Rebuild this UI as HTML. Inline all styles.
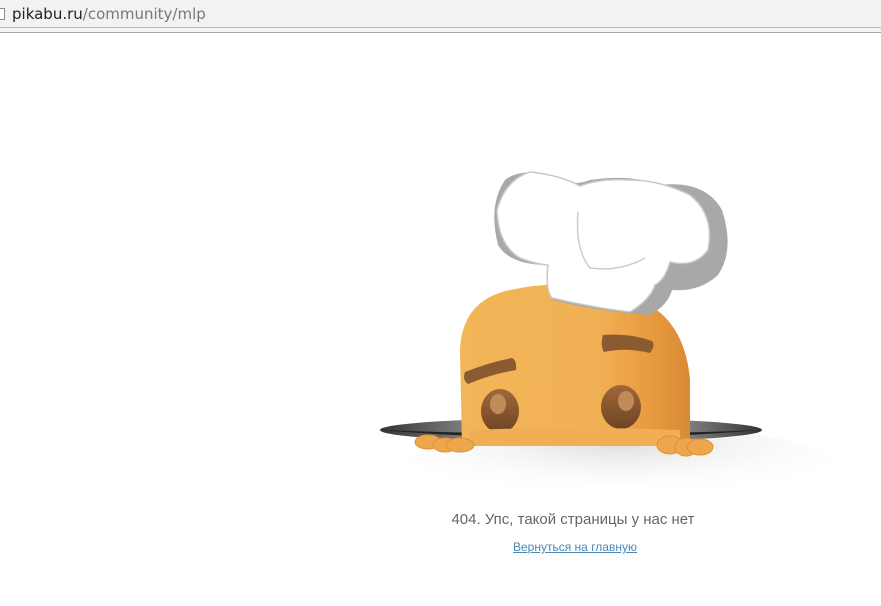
<!DOCTYPE html>
<html><head><meta charset="utf-8"><style>
html,body{margin:0;padding:0;width:881px;height:606px;overflow:hidden;background:#fff;font-family:"Liberation Sans","DejaVu Sans",sans-serif}
.bar{position:absolute;left:0;top:0;width:881px;height:27px;background:#f2f2f1;border-bottom:1px solid #b8b8b8}
.bar2{position:absolute;left:0;top:28px;width:881px;height:4px;background:#f4f4f4;border-bottom:1px solid #a8a8a8}
.url{position:absolute;left:12px;top:5px;font-family:"DejaVu Sans",sans-serif;font-size:15px;color:#222}
.url span{color:#777}
.doc{position:absolute;left:-3px;top:8px;width:6px;height:10px;border:1px solid #888;border-radius:1px;background:#fff}
.t{position:absolute;left:0;width:1146px;text-align:center;top:511px;font-size:15px;color:#666}
.l{position:absolute;left:0;width:1150px;text-align:center;top:540px;font-size:12px;color:#4a87b5;text-decoration:underline}
</style></head><body>
<div class="bar"><div class="doc"></div><div class="url">pikabu.ru<span>/community/mlp</span></div></div>
<div class="bar2"></div>
<svg width="881" height="606" style="position:absolute;left:0;top:0">
<defs>
<linearGradient id="hole" x1="0" x2="1"><stop offset="0" stop-color="#333"/><stop offset=".3" stop-color="#999"/><stop offset=".7" stop-color="#aaa"/><stop offset="1" stop-color="#333"/></linearGradient>
<linearGradient id="body" x1="0" x2="1"><stop offset="0" stop-color="#f2b557"/><stop offset=".6" stop-color="#f1b054"/><stop offset=".8" stop-color="#ea9d40"/><stop offset="1" stop-color="#d98a34"/></linearGradient>
<radialGradient id="sh" cx=".5" cy=".2" r=".6"><stop offset="0" stop-color="#ddd"/><stop offset="1" stop-color="#fff" stop-opacity="0"/></radialGradient>
<linearGradient id="eye" x1="0" y1="0" x2="0" y2="1"><stop offset="0" stop-color="#a0683a"/><stop offset="1" stop-color="#6e4424"/></linearGradient>
</defs>
<ellipse cx="620" cy="470" rx="220" ry="45" fill="url(#sh)"/>
<ellipse cx="571" cy="430" rx="191" ry="12" fill="url(#hole)"/>
<path d="M380 430 Q571 438 762 430 Q571 446 380 430Z" fill="#222"/>
<path d="M462 446 L460 350 Q462 300 510 290 Q580 275 640 300 Q685 320 690 380 L690 446Z" fill="url(#body)"/>
<path d="M465 372 Q490 362 512 358 Q517 360 516 370 Q492 374 468 384 Q462 380 465 372Z" fill="#8a5a30"/>
<path d="M603 335 Q630 333 652 341 Q656 345 650 353 Q625 347 604 352 Q600 345 603 335Z" fill="#8a5a30"/>
<ellipse cx="500" cy="411" rx="19" ry="22" fill="url(#eye)"/>
<ellipse cx="498" cy="404" rx="8" ry="10" fill="#c08a5a"/>
<ellipse cx="621" cy="407" rx="20" ry="22" fill="url(#eye)"/>
<ellipse cx="626" cy="401" rx="8" ry="10" fill="#c08a5a"/>
<path d="M470 430 Q575 426 680 430 L680 446 L470 446Z" fill="#f0ae55"/>
<g fill="#eda64c" stroke="#e09038" stroke-width="1">
<ellipse cx="428" cy="442" rx="13" ry="7"/><ellipse cx="445" cy="445" rx="12" ry="7"/><ellipse cx="460" cy="445" rx="14" ry="7"/>
<ellipse cx="670" cy="445" rx="13" ry="9"/><ellipse cx="686" cy="447" rx="11" ry="9"/><ellipse cx="700" cy="447" rx="13" ry="8"/>
</g>
<path d="M548 265 Q545 290 552 300 Q600 312 650 315 Q668 305 672 290 Q700 292 718 275 Q735 250 722 210 Q705 180 660 185 Q630 174 590 180 Q570 188 550 175 Q520 168 505 180 Q488 205 498 245 Q510 265 548 265Z" fill="#a8a8a8"/>
<path d="M548 265 Q545 290 552 298 Q595 308 630 312 Q650 300 655 285 Q665 280 670 262 Q695 268 708 250 Q715 215 690 195 Q660 180 630 180 Q600 178 580 186 Q560 175 530 172 Q505 180 497 210 Q498 245 520 258 Q535 264 548 265Z" fill="#fff" stroke="#c8c8c8" stroke-width="1.5"/>
<path d="M578 212 Q575 250 590 268 Q620 272 645 258" fill="none" stroke="#ccc" stroke-width="1.5"/>
</svg>
<div class="t">404. Упс, такой страницы у нас нет</div>
<div class="l">Вернуться на главную</div>
</body></html>
